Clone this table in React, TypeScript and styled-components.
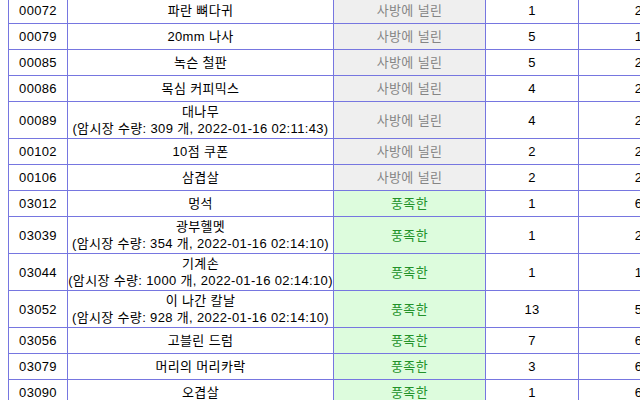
import React from "react";
import styled, { createGlobalStyle } from "styled-components";

const Global = createGlobalStyle`
  html, body { overflow: hidden; }
  body {
    margin: 0 0 0 8px;
    background: #ffffff;
    font-family: "Liberation Sans", "Noto Sans CJK KR", sans-serif;
    font-size: 13px;
    letter-spacing: 0.35px;
    color: #000;
  }
`;

const Table = styled.table`
  border-collapse: collapse;
  table-layout: fixed;
  width: 690px;
  margin-top: -3px;
`;

const Col = styled.col<{ $w: number }>`
  width: ${(p) => p.$w}px;
`;

const Row = styled.tr``;

const Cell = styled.td<{ $tone?: "plain" | "gray" | "green" }>`
  border: 1px solid #7676e0;
  height: 23px;
  padding: 1px 0;
  line-height: 17px;
  text-align: center;
  vertical-align: middle;
  white-space: nowrap;
  overflow: hidden;
  background: ${(p) =>
    p.$tone === "gray" ? "#efefef" : p.$tone === "green" ? "#ddfcdd" : "#ffffff"};
  color: ${(p) =>
    p.$tone === "gray" ? "#858585" : p.$tone === "green" ? "#23922a" : "#000000"};
`;

const Line = styled.div`
  display: block;
  height: 17px;
`;

type Item = {
  id: string;
  name: string;
  market?: string;
  state: "사방에 널린" | "풍족한";
  a: string;
  b: string;
};

const items: Item[] = [
  { id: "00072", name: "파란 뼈다귀", state: "사방에 널린", a: "1", b: "2" },
  { id: "00079", name: "20mm 나사", state: "사방에 널린", a: "5", b: "1" },
  { id: "00085", name: "녹슨 철판", state: "사방에 널린", a: "5", b: "2" },
  { id: "00086", name: "목심 커피믹스", state: "사방에 널린", a: "4", b: "2" },
  { id: "00089", name: "대나무", market: "(암시장 수량: 309 개, 2022-01-16 02:11:43)", state: "사방에 널린", a: "4", b: "2" },
  { id: "00102", name: "10점 쿠폰", state: "사방에 널린", a: "2", b: "2" },
  { id: "00106", name: "삼겹살", state: "사방에 널린", a: "2", b: "2" },
  { id: "03012", name: "멍석", state: "풍족한", a: "1", b: "6" },
  { id: "03039", name: "광부헬멧", market: "(암시장 수량: 354 개, 2022-01-16 02:14:10)", state: "풍족한", a: "1", b: "2" },
  { id: "03044", name: "기계손", market: "(암시장 수량: 1000 개, 2022-01-16 02:14:10)", state: "풍족한", a: "1", b: "1" },
  { id: "03052", name: "이 나간 칼날", market: "(암시장 수량: 928 개, 2022-01-16 02:14:10)", state: "풍족한", a: "13", b: "5" },
  { id: "03056", name: "고블린 드럼", state: "풍족한", a: "7", b: "6" },
  { id: "03079", name: "머리의 머리카락", state: "풍족한", a: "3", b: "6" },
  { id: "03090", name: "오겹살", state: "풍족한", a: "1", b: "6" },
];

const widths = [59, 266, 152, 93, 120];

export default function App() {
  return (
    <>
      <Global />
      <Table>
        <colgroup>
          {widths.map((w, i) => (
            <Col key={i} $w={w} />
          ))}
        </colgroup>
        <tbody>
          {items.map((it) => (
            <Row key={it.id}>
              <Cell>{it.id}</Cell>
              <Cell>
                <Line>{it.name}</Line>
                {it.market && <Line>{it.market}</Line>}
              </Cell>
              <Cell $tone={it.state === "풍족한" ? "green" : "gray"}>{it.state}</Cell>
              <Cell>{it.a}</Cell>
              <Cell>{it.b}</Cell>
            </Row>
          ))}
        </tbody>
      </Table>
    </>
  );
}
